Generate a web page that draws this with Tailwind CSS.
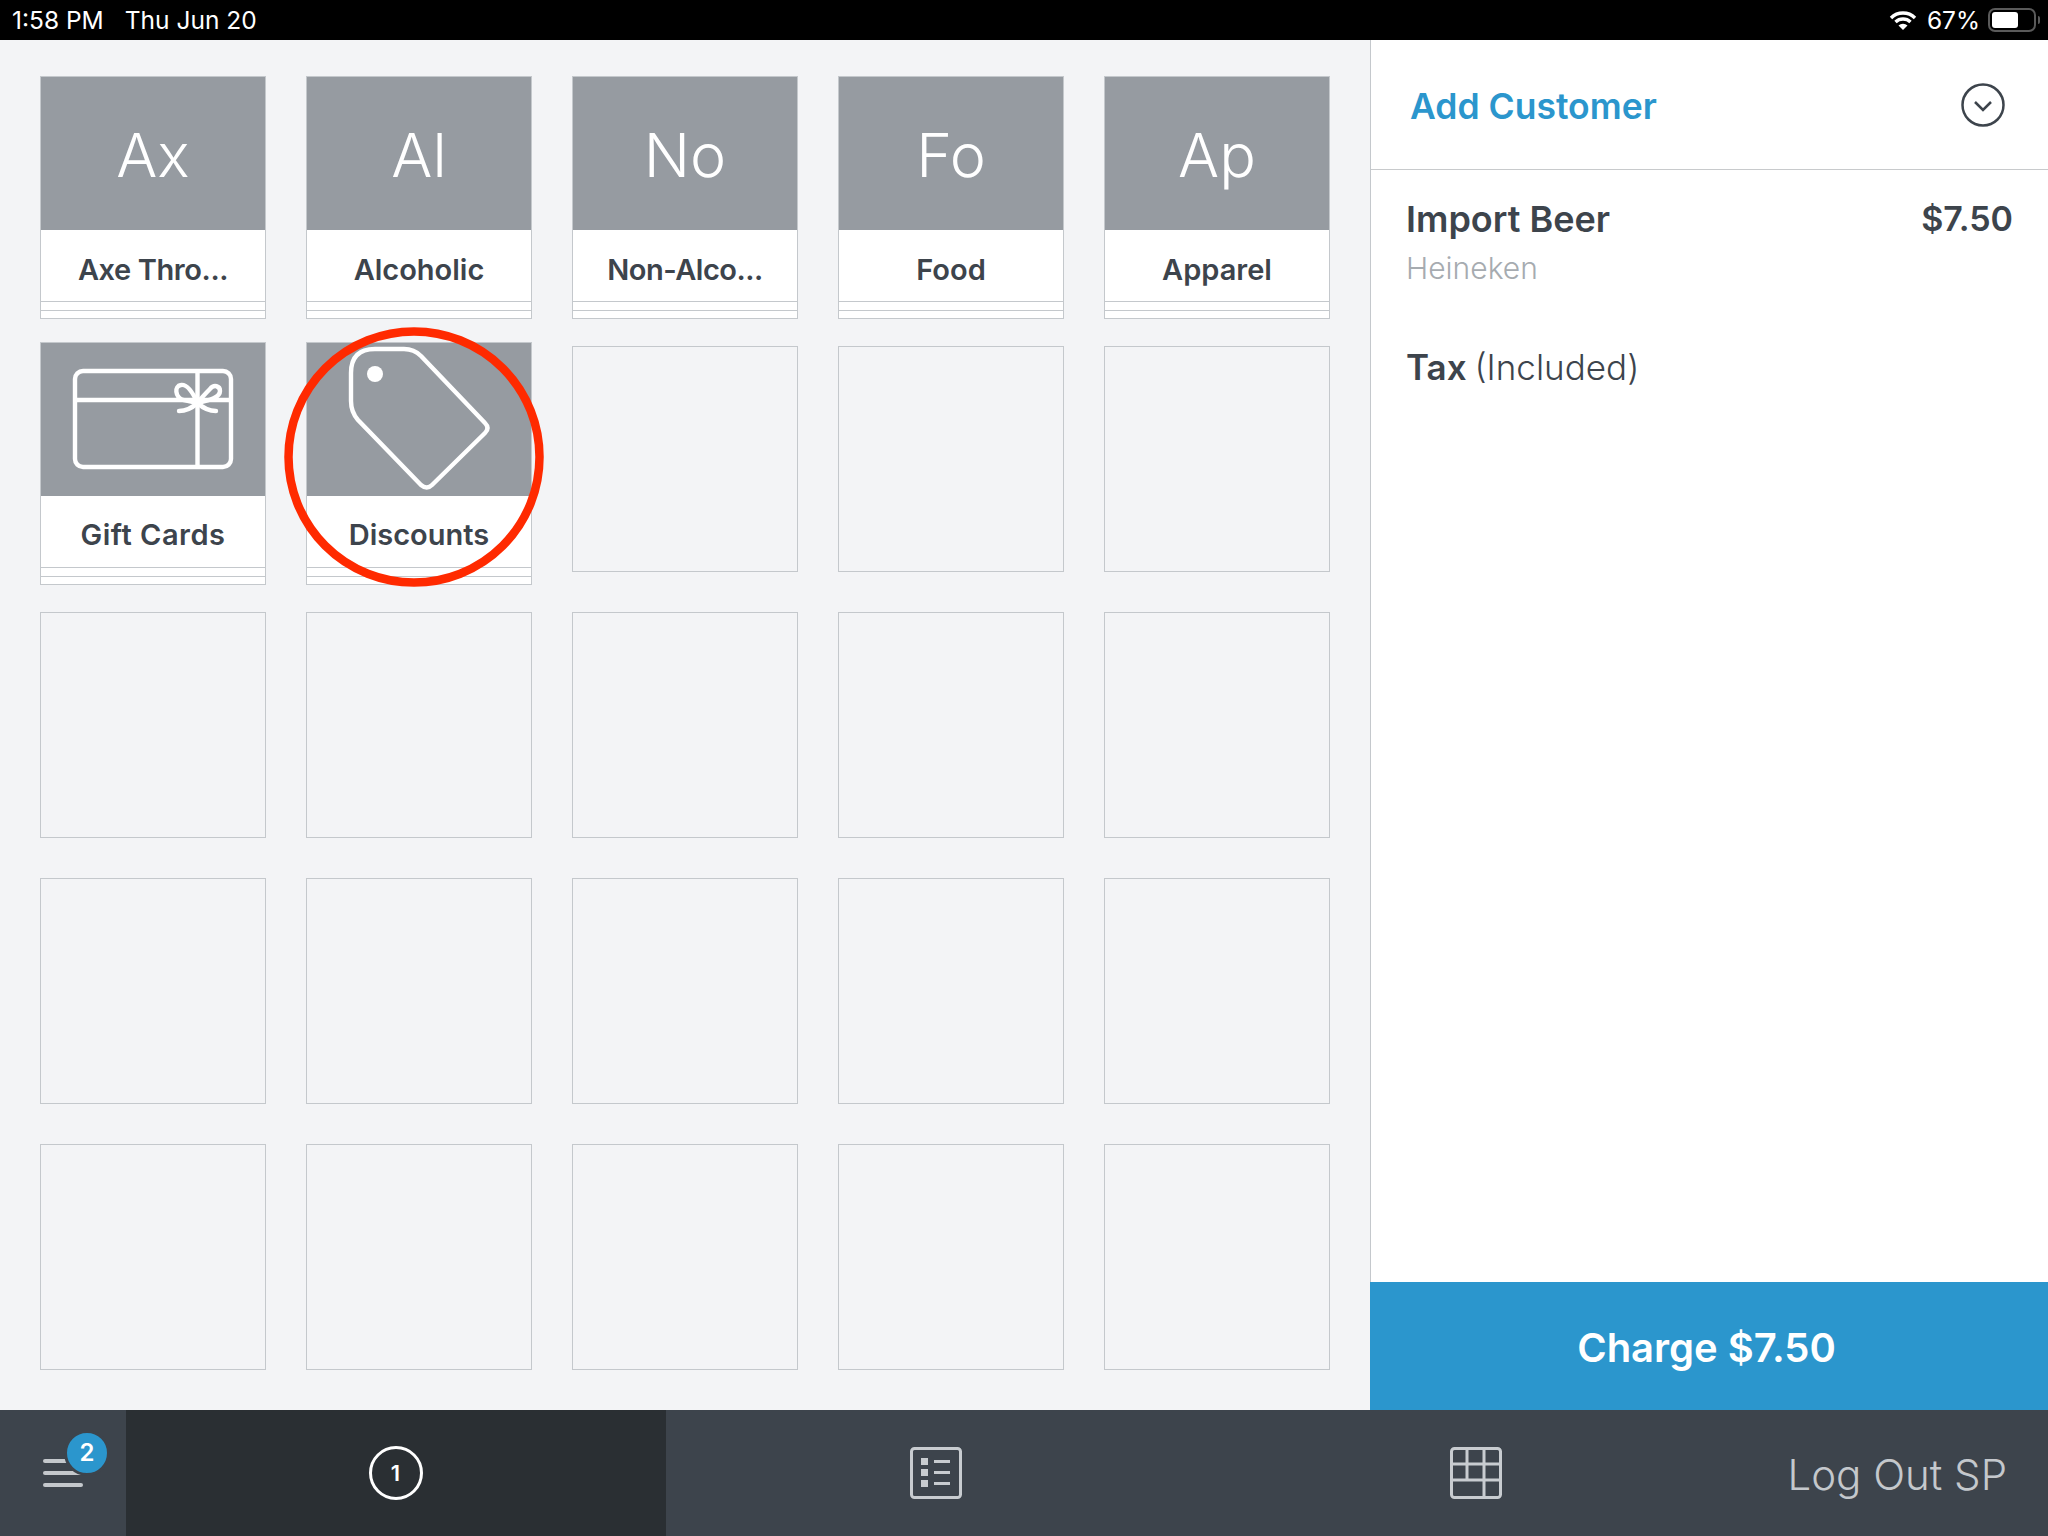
<!doctype html>
<html><head><meta charset="utf-8">
<script src="https://cdn.jsdelivr.net/npm/@tailwindcss/browser@4"></script>
</head>
<body class="m-0">
<div class="relative w-[2048px] h-[1536px] flex flex-col overflow-hidden bg-white font-['Inter',sans-serif] text-[#3d444c]">
  <!-- status bar -->
  <div class="h-10 shrink-0 bg-black text-white flex items-center pl-3 pr-[12px] text-[24.500px] leading-none">
    <span>1:58 PM</span><span class="ml-[21px]">Thu Jun 20</span>
    <svg class="ml-auto" width="28" height="22" viewBox="0 0 28 22"><path d="M2 9 A17 17 0 0 1 26 9" fill="none" stroke="#fff" stroke-width="3.4"/><path d="M6.500 13 A11 11 0 0 1 21.500 13" fill="none" stroke="#fff" stroke-width="3.4"/><path d="M14 21 L9.500 16.500 A6.500 6.500 0 0 1 18.500 16.500 Z" fill="#fff"/></svg>
    <span class="ml-[10px]">67%</span>
    <div class="ml-[8px] relative w-[48px] h-[24px] rounded-[7px] border-2 border-[#5a5a5a] p-[2px]"><div class="h-full w-[26px] bg-white rounded-[3px]"></div><div class="absolute -right-[6px] top-[6px] w-[2px] h-[8px] bg-[#5a5a5a] rounded-r"></div></div>
  </div>
  <!-- main -->
  <div class="flex flex-1 min-h-0">
    <div class="w-[1370px] shrink-0 bg-[#f3f4f6] p-10 grid grid-cols-[repeat(5,226px)] grid-rows-[repeat(5,226px)] gap-10">
      <div class="h-[226px]"><div class="-mt-[4px] border border-[#c4c8cc] bg-white">
        <div class="h-[153px] pt-[4px] bg-[#969ba1] flex items-center justify-center text-white text-[61px] font-light">Ax</div>
        <div class="h-[71px] pt-[8px] flex items-center justify-center text-[29px] font-semibold tracking-[-0.4px]">Axe Thro...</div>
        <div class="h-[9px] border-t border-[#c4c8cc]"></div><div class="h-[8px] border-t border-[#c4c8cc]"></div>
      </div></div>
      <div class="h-[226px]"><div class="-mt-[4px] border border-[#c4c8cc] bg-white">
        <div class="h-[153px] pt-[4px] bg-[#969ba1] flex items-center justify-center text-white text-[61px] font-light">Al</div>
        <div class="h-[71px] pt-[8px] flex items-center justify-center text-[29px] font-semibold">Alcoholic</div>
        <div class="h-[9px] border-t border-[#c4c8cc]"></div><div class="h-[8px] border-t border-[#c4c8cc]"></div>
      </div></div>
      <div class="h-[226px]"><div class="-mt-[4px] border border-[#c4c8cc] bg-white">
        <div class="h-[153px] pt-[4px] bg-[#969ba1] flex items-center justify-center text-white text-[61px] font-light">No</div>
        <div class="h-[71px] pt-[8px] flex items-center justify-center text-[29px] font-semibold tracking-[-0.5px]">Non-Alco...</div>
        <div class="h-[9px] border-t border-[#c4c8cc]"></div><div class="h-[8px] border-t border-[#c4c8cc]"></div>
      </div></div>
      <div class="h-[226px]"><div class="-mt-[4px] border border-[#c4c8cc] bg-white">
        <div class="h-[153px] pt-[4px] bg-[#969ba1] flex items-center justify-center text-white text-[61px] font-light">Fo</div>
        <div class="h-[71px] pt-[8px] flex items-center justify-center text-[29px] font-semibold">Food</div>
        <div class="h-[9px] border-t border-[#c4c8cc]"></div><div class="h-[8px] border-t border-[#c4c8cc]"></div>
      </div></div>
      <div class="h-[226px]"><div class="-mt-[4px] border border-[#c4c8cc] bg-white">
        <div class="h-[153px] pt-[4px] bg-[#969ba1] flex items-center justify-center text-white text-[61px] font-light">Ap</div>
        <div class="h-[71px] pt-[8px] flex items-center justify-center text-[29px] font-semibold">Apparel</div>
        <div class="h-[9px] border-t border-[#c4c8cc]"></div><div class="h-[8px] border-t border-[#c4c8cc]"></div>
      </div></div>
      <div class="h-[226px]"><div class="-mt-[4px] border border-[#c4c8cc] bg-white">
        <div class="h-[153px] bg-[#969ba1]">
          <svg width="224" height="153" viewBox="0 0 224 153" fill="none" stroke="#fff" stroke-width="4.4" stroke-linecap="round"><rect x="34" y="28" width="156" height="96" rx="8"/><path d="M36 57H188M156.500 29V122"/><path d="M156.500 60C152 50 146 41 140 42C133 43 134 54 142 57L156.500 60C171 57 179 54 179 48C179 43 173 41 169 46C165 50 161 54 156.500 60"/><path d="M156.500 60C151 65 146 68 138 68M156.500 60C162 65 167 68 175 68"/></svg>
        </div>
        <div class="h-[71px] pt-[6px] flex items-center justify-center text-[29px] font-semibold tracking-[0.5px]">Gift Cards</div>
        <div class="h-[9px] border-t border-[#c4c8cc]"></div><div class="h-[8px] border-t border-[#c4c8cc]"></div>
      </div></div>
      <div class="h-[226px]"><div class="-mt-[4px] border border-[#c4c8cc] bg-white">
        <div class="h-[153px] bg-[#969ba1]">
          <svg width="224" height="153" viewBox="307 343 224 153" fill="none" stroke="#fff" stroke-width="4.4" stroke-linejoin="round"><path d="M375 349H404Q414 349 421 356L485 423Q490 428 485 433L432 485Q427 490 421 485L358 420Q351 412 351 401V373Q351 349 375 349Z"/><circle cx="375" cy="374" r="8" fill="#fff" stroke="none"/></svg>
        </div>
        <div class="h-[71px] pt-[6px] flex items-center justify-center text-[29px] font-semibold">Discounts</div>
        <div class="h-[9px] border-t border-[#c4c8cc]"></div><div class="h-[8px] border-t border-[#c4c8cc]"></div>
      </div></div>
      <div class="border border-[#c4c8cc]"></div><div class="border border-[#c4c8cc]"></div><div class="border border-[#c4c8cc]"></div>
      <div class="border border-[#c4c8cc]"></div><div class="border border-[#c4c8cc]"></div><div class="border border-[#c4c8cc]"></div><div class="border border-[#c4c8cc]"></div><div class="border border-[#c4c8cc]"></div>
      <div class="border border-[#c4c8cc]"></div><div class="border border-[#c4c8cc]"></div><div class="border border-[#c4c8cc]"></div><div class="border border-[#c4c8cc]"></div><div class="border border-[#c4c8cc]"></div>
      <div class="border border-[#c4c8cc]"></div><div class="border border-[#c4c8cc]"></div><div class="border border-[#c4c8cc]"></div><div class="border border-[#c4c8cc]"></div><div class="border border-[#c4c8cc]"></div>
    </div>
    <!-- right panel -->
    <div class="flex-1 flex flex-col border-l border-[#c4c8cc] min-w-0">
      <div class="h-[130px] shrink-0 border-b border-[#c8cacc] flex items-center justify-between pl-[39px] pr-[43px]">
        <span class="text-[35.500px] font-semibold text-[#2b96cd] pt-[5px]">Add Customer</span>
        <svg width="44" height="44" viewBox="0 0 44 44" fill="none" stroke="#3d444c" stroke-width="2.500"><circle cx="22" cy="22" r="20.500"/><path d="M14 19L22 27L30 19"/></svg>
      </div>
      <div class="flex-1 pl-[35px] pr-[35px] pt-[28px]">
        <div class="flex justify-between items-center font-semibold leading-[42px]"><span class="text-[36px]">Import Beer</span><span class="text-[34px]">$7.50</span></div>
        <div class="text-[#a6abb0] text-[30px] font-light leading-[36px] mt-[10px]">Heineken</div>
        <div class="text-[35px] leading-[44px] mt-[59px] font-light"><span class="font-semibold">Tax</span><span class="ml-[-2px]"> (Included)</span></div>
      </div>
      <div class="h-[128px] shrink-0 -ml-px pr-[5px] pt-[3px] bg-[#2b96cd] text-white flex items-center justify-center text-[40px] font-semibold">Charge $7.50</div>
    </div>
  </div>
  <!-- bottom bar -->
  <div class="h-[126px] shrink-0 bg-[#3d444c] flex">
    <div class="w-[126px] relative">
      <div class="absolute left-[43px] top-[49px] w-10 flex flex-col gap-2"><div class="h-1 rounded bg-[#c4c8cc]"></div><div class="h-1 rounded bg-[#c4c8cc]"></div><div class="h-1 rounded bg-[#c4c8cc]"></div></div>
      <div class="absolute left-[64px] top-[20px] w-[46px] h-[46px] rounded-full border-[3px] border-[#3d444c] bg-[#2b96cd] text-white text-[24px] font-semibold flex items-center justify-center">2</div>
    </div>
    <div class="w-[540px] bg-[#2a2f33] flex items-center justify-center">
      <div class="w-[54px] h-[54px] rounded-full border-[3px] border-white text-white text-[22px] font-semibold flex items-center justify-center -ml-px">1</div>
    </div>
    <div class="w-[540px] flex items-center justify-center">
      <svg width="52" height="52" viewBox="0 0 52 52" fill="none" stroke="#c8ccd0" stroke-width="3"><rect x="1.500" y="1.500" width="49" height="49" rx="3"/><rect x="11" y="11" width="7" height="7" fill="#c8ccd0" stroke="none"/><rect x="11" y="22" width="7" height="7" fill="#c8ccd0" stroke="none"/><rect x="11" y="33" width="7" height="7" fill="#c8ccd0" stroke="none"/><path d="M24 14.500H40M24 25.500H40M24 36.500H40"/></svg>
    </div>
    <div class="w-[540px] flex items-center justify-center">
      <svg width="52" height="52" viewBox="0 0 52 52" fill="none" stroke="#c8ccd0" stroke-width="3"><rect x="1.500" y="1.500" width="49" height="49" rx="3"/><path d="M2 17H50M2 33H50M17 2V33M34 2V50"/></svg>
    </div>
    <div class="flex-1 flex items-center justify-end pr-[41px] pt-[3px] text-[42px] font-light text-[#c4c8cc]">Log Out SP</div>
  </div>
  <!-- red annotation -->
  <svg class="absolute left-[284px] top-[327px]" width="260" height="260" viewBox="0 0 260 260" fill="none"><ellipse cx="130" cy="130" rx="125.500" ry="125.500" stroke="#ff2a00" stroke-width="8.500"/></svg>
</div>
</body></html>
